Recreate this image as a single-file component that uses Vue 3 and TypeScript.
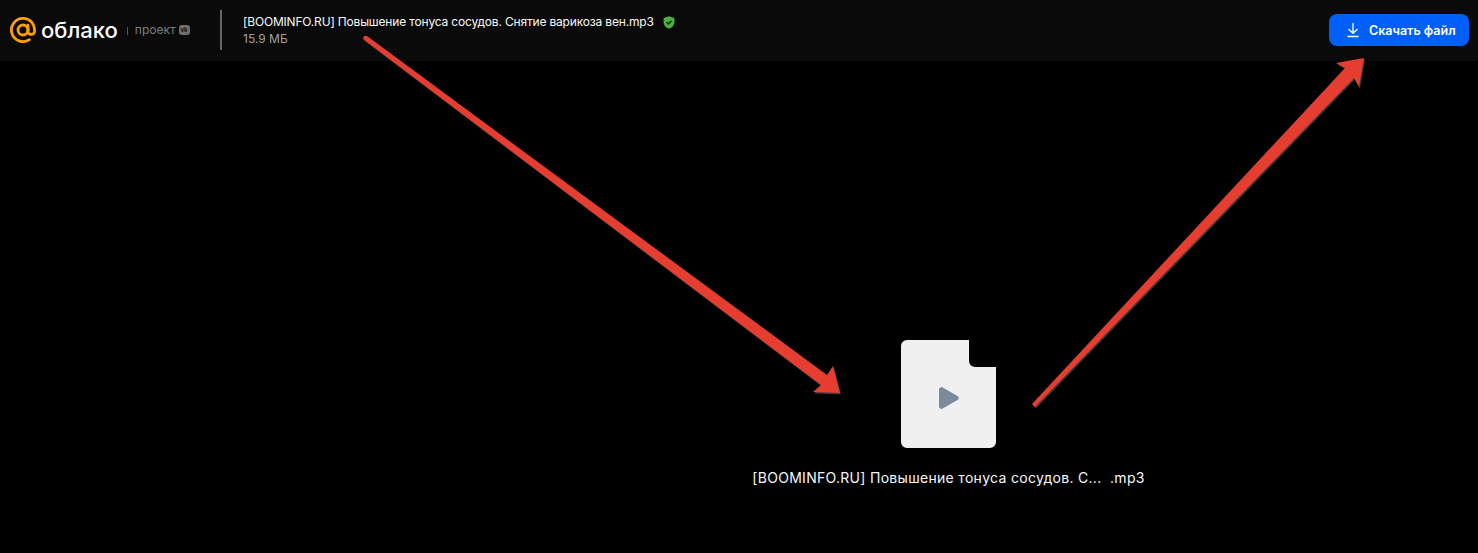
<template>
  <div class="page">
    <header class="topbar">
      <div class="brand">
        <svg class="brand__at" width="26" height="26" viewBox="0 0 26 26" fill="none" stroke="#ff9e00" stroke-width="2.8">
          <circle cx="13" cy="13" r="5"></circle>
          <path d="M18 8.200v6.300a3.300 3.300 0 0 0 6.400 0.600C25.600 7.600 20.200 1.400 13 1.400a11.600 11.600 0 1 0 6.400 21.300" stroke-linecap="round"></path>
        </svg>
        <span class="brand__name">облако</span>
        <span class="brand__sep"></span>
        <span class="brand__project">проект</span>
        <span class="brand__vk">vk</span>
      </div>
      <div class="topbar__divider"></div>
      <div class="file-info">
        <div class="file-info__title">
          <span>{{ fileName }}</span>
          <svg width="12" height="13" viewBox="0 0 12 13">
            <path d="M6 0.300 11.400 2v4.200c0 3-2.200 5.300-5.400 6.500C2.800 11.500 0.600 9.200 0.600 6.200V2z" fill="#4caf3f"></path>
            <path d="M3.600 6.200 5.400 8 8.500 4.800" fill="none" stroke="#10240c" stroke-width="1.400"></path>
          </svg>
        </div>
        <div class="file-info__size">15.9 МБ</div>
      </div>
      <button class="download">
        <svg width="16" height="16" viewBox="0 0 16 16" fill="none" stroke="#fff" stroke-width="1.300">
          <path d="M8 1v10M3.500 7 8 11.300 12.500 7M2.500 14.500h11"></path>
        </svg>
        <span>Скачать файл</span>
      </button>
    </header>

    <main class="preview">
      <svg class="preview__icon" width="95" height="108" viewBox="0 0 95 108">
        <path d="M6 0H68V21a6 6 0 0 0 6 6H95V102a6 6 0 0 1-6 6H6a6 6 0 0 1-6-6V6a6 6 0 0 1 6-6z" fill="#f0f0f0"></path>
        <path d="M38 49.500a2.500 2.500 0 0 1 3.700-2.100L56.500 55.900a2.400 2.400 0 0 1 0 4.200L41.700 68.600a2.500 2.500 0 0 1-3.700-2.100z" fill="#7b8a9c"></path>
      </svg>
      <div class="preview__name">[BOOMINFO.RU] Повышение тонуса сосудов. С...&nbsp; .mp3</div>
    </main>

    <!-- стрелки поверх скриншота -->
    <svg class="arrows" width="1478" height="553" viewBox="0 0 1478 553">
      <g v-for="(points, i) in arrows" :key="i">
        <polygon :points="points" fill="#3a3a3a" transform="translate(1 1.500)"></polygon>
        <polygon :points="points" fill="#e53e30"></polygon>
      </g>
    </svg>
  </div>
</template>

<script setup lang="ts">
const fileName = '[BOOMINFO.RU] Повышение тонуса сосудов. Снятие варикоза вен.mp3'

const arrows: string[] = [
  '364,36 367,36 827,375 833,366 840,393 813,392 821,385 363,39',
  '1032,404 1345,68 1336,63 1364,58 1359,87 1354,78 1035,407'
]
</script>

<style scoped>
.page {
  position: relative;
  width: 1478px;
  height: 553px;
  background: #000;
  overflow: hidden;
  font-family: Inter, "Noto Sans", sans-serif;
}

.topbar {
  display: flex;
  align-items: center;
  height: 61px;
  padding: 0 9px 1px 10px;
  box-sizing: border-box;
  background: #0a0a0a;
}

.brand {
  display: flex;
  align-items: center;
  width: 210px;
  flex-shrink: 0;
}

.brand__at {
  flex-shrink: 0;
}

.brand__name {
  margin-left: 5px;
  color: #fff;
  font-size: 22px;
  font-weight: 500;
  line-height: 26px;
}

.brand__sep {
  width: 1px;
  height: 8px;
  margin: 2px 7px 0 9px;
  background: #555;
}

.brand__project {
  color: #7c7c7c;
  font-size: 12px;
  line-height: 14px;
}

.brand__vk {
  width: 11px;
  height: 10px;
  margin-left: 3px;
  border-radius: 3px;
  background: #6f6f6f;
  color: #111;
  font-size: 6px;
  font-weight: 700;
  line-height: 10px;
  text-align: center;
}

.topbar__divider {
  width: 2px;
  height: 40px;
  background: #666;
  flex-shrink: 0;
}

.file-info {
  flex: 1;
  margin-left: 21px;
}

.file-info__title {
  display: flex;
  align-items: center;
  gap: 9px;
  color: #f8f8f8;
  font-size: 12px;
  letter-spacing: -0.175px;
  line-height: 18px;
}

.file-info__size {
  color: #a0a0a0;
  font-size: 12px;
  line-height: 16px;
}

.download {
  display: flex;
  align-items: center;
  gap: 8px;
  width: 140px;
  height: 32px;
  padding: 0 0 0 16px;
  border: none;
  border-radius: 8px;
  background: #005ff9;
  color: #fff;
  font-family: inherit;
  font-size: 12.5px;
  font-weight: 600;
}

.preview {
  display: flex;
  flex-direction: column;
  align-items: center;
  padding: 279px 0 0 419px;
}

.preview__name {
  margin-top: 20px;
  color: #f8f8f8;
  font-size: 14px;
  letter-spacing: 0.3px;
  line-height: 20px;
  white-space: nowrap;
}

.arrows {
  position: absolute;
  top: 0;
  left: 0;
  pointer-events: none;
}
</style>
